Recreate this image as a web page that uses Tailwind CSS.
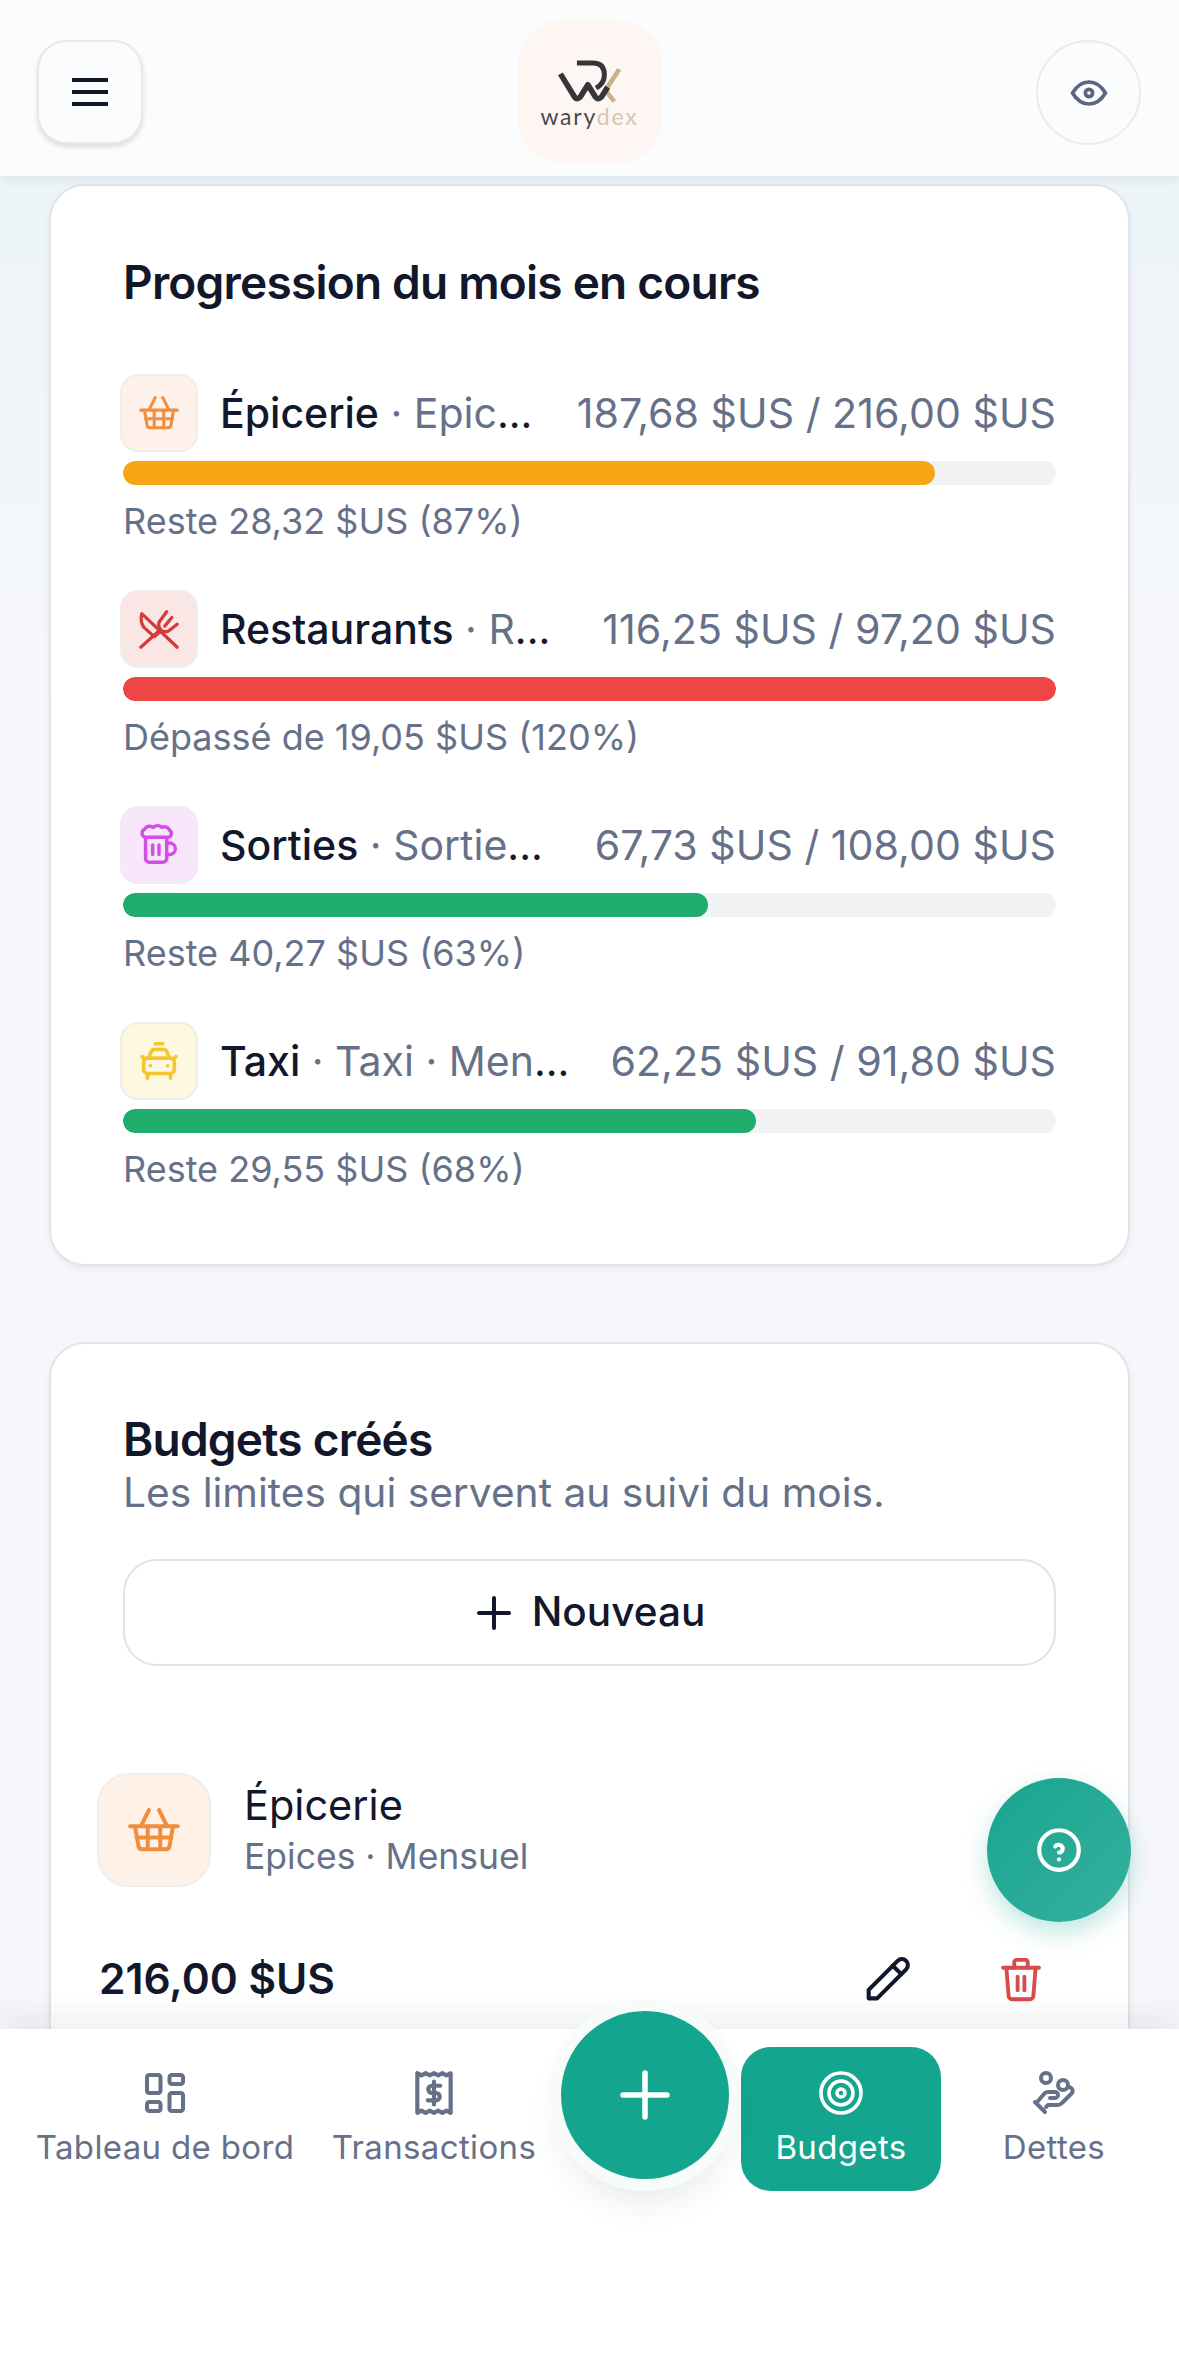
<!DOCTYPE html>
<html lang="fr">
<head>
<meta charset="utf-8">
<script src="https://cdn.jsdelivr.net/npm/@tailwindcss/browser@4"></script>
</head>
<body class="m-0">
<div class="relative w-[1179px] h-[2379px] overflow-hidden bg-[#f6f7fb] font-['Inter',sans-serif] text-[#12172b]">
  <div class="absolute inset-x-0 top-0 h-[700px] bg-gradient-to-b from-[#e9f3f7] to-[#f6f7fb]"></div>

  <!-- Header -->
  <header class="absolute z-20 inset-x-0 top-0 h-[176px] bg-[#fbfcfd] shadow-[0_4px_10px_rgba(30,40,60,0.07)] flex items-start justify-between pl-[37px] pr-[38px]">
    <button class="mt-[40px] w-[106px] h-[104px] rounded-[30px] bg-[#fbfcfd] border-2 border-[#e6e8ec] shadow-[0_3px_5px_rgba(30,40,60,0.14)] flex items-center justify-center">
      <svg width="36" height="28" viewBox="0 0 36 28" fill="none" stroke="#12172b" stroke-width="4"><path d="M0 2h36M0 14h36M0 26h36"/></svg>
    </button>
    <div class="mt-[20px] w-[144px] h-[143px] rounded-[44px] bg-[#fdf6f2] flex flex-col items-center pt-[40px]">
      <svg width="67" height="43" viewBox="200 180 200 130" fill="none">
        <path d="M390 208 L348 272 L375 305" stroke="#c9b28a" stroke-width="14"/>
        <path d="M212 222 L255 292 Q262 302 272 292 L295 255 L318 292 Q326 302 336 292 L355 262" stroke="#35363a" stroke-width="17" stroke-linejoin="round"/>
        <path d="M262 189 H310 Q345 189 345 225 Q345 250 320 265" stroke="#35363a" stroke-width="15"/>
      </svg>
      <div class="text-[23px] leading-[22px] tracking-[1.8px] mt-[2px] text-[#4a4a4c] font-['Lato',sans-serif]">wary<span class="text-[#d4c8ae]">dex</span></div>
    </div>
    <button class="mt-[40px] w-[105px] h-[105px] rounded-full bg-[#fbfcfd] border-2 border-[#e9ebef] flex items-center justify-center">
      <svg width="44" height="44" viewBox="0 0 24 24" fill="none" stroke="#5b6780" stroke-width="2" stroke-linecap="round" stroke-linejoin="round"><path d="M10 12a2 2 0 1 0 4 0a2 2 0 0 0 -4 0"/><path d="M21 12c-2.4 4 -5.4 6 -9 6c-3.6 0 -6.6 -2 -9 -6c2.4 -4 5.4 -6 9 -6c3.6 0 6.6 2 9 6"/></svg>
    </button>
  </header>

  <main class="relative px-[49px] pt-[184px] flex flex-col gap-[76px]">
    <!-- Progress card -->
    <section class="h-[1082px] rounded-[36px] bg-white border-2 border-[#e2e4e9] shadow-[0_3px_6px_rgba(30,40,60,0.06)] pl-[72px] pr-[72px] pt-[68px]">
      <h2 class="text-[46px] leading-[56px] font-semibold tracking-[-0.78px] m-0">Progression du mois en cours</h2>
      <div class="mt-[64px] flex flex-col gap-[47px]">

        <div>
          <div class="flex items-center justify-between -ml-[3px]">
            <div class="flex items-center gap-[22px] min-w-0">
              <span class="w-[78px] h-[78px] shrink-0 rounded-[18px] bg-[#fdf1e9] border-2 border-[#eeeeec] flex items-center justify-center">
                <svg width="46" height="46" viewBox="0 0 24 24" fill="none" stroke="#f28d3c" stroke-width="1.6" stroke-linecap="round" stroke-linejoin="round"><path d="M7 10 L10 4M17 10 L14 4"/><path d="M2.500 10.500h19"/><path d="M4.500 11l1.300 7.500a1.500 1.500 0 0 0 1.500 1.200h9.400a1.500 1.500 0 0 0 1.500 -1.200L19.500 11"/><path d="M9.500 11v8.500M14.500 11v8.500M5 15h14"/></svg>
              </span>
              <span class="text-[41px] leading-[50px] whitespace-nowrap font-medium">Épicerie<span class="font-normal text-[#667189]"> · Epic<span class="text-[#12172b]">...</span></span></span>
            </div>
            <span class="text-[41.2px] leading-[50px] text-[#667189] whitespace-nowrap">187,68 $US / 216,00 $US</span>
          </div>
          <div class="mt-[9px] h-[24px] rounded-full bg-[#f0f2f4] overflow-hidden"><div class="h-full rounded-full bg-[#f8a515] w-[87%]"></div></div>
          <p class="m-0 mt-[14px] text-[36px] leading-[44px] text-[#667189]">Reste 28,32 $US (87%)</p>
        </div>

        <div>
          <div class="flex items-center justify-between -ml-[3px]">
            <div class="flex items-center gap-[22px] min-w-0">
              <span class="w-[78px] h-[78px] shrink-0 rounded-[18px] bg-[#f9e6e5] border-2 border-[#eeeeec] flex items-center justify-center">
                <svg width="46" height="46" viewBox="0 0 24 24" fill="none" stroke="#d63a3a" stroke-width="1.7" stroke-linecap="round" stroke-linejoin="round"><path d="M2.500 21.500 L12.500 12.500"/><path d="M16 3 L12 8.500 Q11.500 11 13 12.500 Q14.500 14 17 13 L21.500 9.500"/><path d="M18.700 6 L15 10.500"/><path d="M21.500 21.500 L3 4 Q2 8 4 11 L9.500 16 L12.500 13.500"/></svg>
              </span>
              <span class="text-[41px] leading-[50px] whitespace-nowrap font-medium">Restaurants<span class="font-normal text-[#667189]"> · R<span class="text-[#12172b]">...</span></span></span>
            </div>
            <span class="text-[41.2px] leading-[50px] text-[#667189] whitespace-nowrap">116,25 $US / 97,20 $US</span>
          </div>
          <div class="mt-[9px] h-[24px] rounded-full bg-[#f0f2f4] overflow-hidden"><div class="h-full rounded-full bg-[#ee4545] w-full"></div></div>
          <p class="m-0 mt-[14px] text-[36px] leading-[44px] text-[#667189]">Dépassé de 19,05 $US (120%)</p>
        </div>

        <div>
          <div class="flex items-center justify-between -ml-[3px]">
            <div class="flex items-center gap-[22px] min-w-0">
              <span class="w-[78px] h-[78px] shrink-0 rounded-[18px] bg-[#f8e7fb] border-2 border-[#efecf1] flex items-center justify-center">
                <svg width="46" height="46" viewBox="0 0 24 24" fill="none" stroke="#d24fe6" stroke-width="1.8" stroke-linecap="round" stroke-linejoin="round"><path d="M5 8.500v10.500a2 2 0 0 0 2 2h7a2 2 0 0 0 2 -2v-10.500"/><path d="M5 8a2.200 2.200 0 0 1 -.5 -4.200a3 3 0 0 1 4.500 -1a3.500 3.500 0 0 1 4.500 0a3 3 0 0 1 4 1.500a2 2 0 0 1 -1 3.700h-11.500z"/><path d="M16 11h1.500a3 3 0 0 1 0 6h-1.500"/><path d="M8.700 12v5M12 12v5"/></svg>
              </span>
              <span class="text-[41px] leading-[50px] whitespace-nowrap font-medium">Sorties<span class="font-normal text-[#667189]"> · Sortie<span class="text-[#12172b]">...</span></span></span>
            </div>
            <span class="text-[41.2px] leading-[50px] text-[#667189] whitespace-nowrap">67,73 $US / 108,00 $US</span>
          </div>
          <div class="mt-[9px] h-[24px] rounded-full bg-[#f0f2f4] overflow-hidden"><div class="h-full rounded-full bg-[#20ac6c] w-[62.7%]"></div></div>
          <p class="m-0 mt-[14px] text-[36px] leading-[44px] text-[#667189]">Reste 40,27 $US (63%)</p>
        </div>

        <div>
          <div class="flex items-center justify-between -ml-[3px]">
            <div class="flex items-center gap-[22px] min-w-0">
              <span class="w-[78px] h-[78px] shrink-0 rounded-[18px] bg-[#fef8e0] border-2 border-[#eeeeea] flex items-center justify-center">
                <svg width="46" height="46" viewBox="0 0 24 24" fill="none" stroke="#f6c631" stroke-width="1.9" stroke-linecap="round" stroke-linejoin="round"><path d="M10 3h4"/><path d="M6.500 10.500 L8 7a1.500 1.500 0 0 1 1.400 -1h5.200a1.500 1.500 0 0 1 1.400 1L17.500 10.500"/><rect x="4" y="10.500" width="16" height="8" rx="2"/><path d="M6 18.500v2.500M18 18.500v2.500M4 10.500l-.8 -.8M20 10.500l.8 -.8"/><path d="M7.500 14.500h.01M16.500 14.500h.01"/></svg>
              </span>
              <span class="text-[41px] leading-[50px] whitespace-nowrap font-medium">Taxi<span class="font-normal text-[#667189]"> · Taxi · Men<span class="text-[#12172b]">...</span></span></span>
            </div>
            <span class="text-[41.2px] leading-[50px] text-[#667189] whitespace-nowrap">62,25 $US / 91,80 $US</span>
          </div>
          <div class="mt-[9px] h-[24px] rounded-full bg-[#f0f2f4] overflow-hidden"><div class="h-full rounded-full bg-[#20ac6c] w-[67.8%]"></div></div>
          <p class="m-0 mt-[14px] text-[36px] leading-[44px] text-[#667189]">Reste 29,55 $US (68%)</p>
        </div>
      </div>
    </section>

    <!-- Budgets card -->
    <section class="h-[900px] rounded-[36px] bg-white border-2 border-[#e2e4e9] shadow-[0_3px_6px_rgba(30,40,60,0.06)]">
      <div class="px-[72px] pt-[68px]">
        <h2 class="text-[46px] leading-[54px] font-semibold tracking-[-0.78px] m-0">Budgets créés</h2>
        <p class="m-0 text-[40.700px] leading-[54px] text-[#667189]">Les limites qui servent au suivi du mois.</p>
        <button class="mt-[39px] w-full h-[107px] rounded-[34px] bg-white border-2 border-[#dfe2e7] flex items-center justify-center gap-[18px] text-[40.500px] font-medium">
          <svg width="40" height="40" viewBox="0 0 40 40" fill="none" stroke="#12172b" stroke-width="4" stroke-linecap="round"><path d="M20 5v30M5 20h30"/></svg>
          Nouveau
        </button>
      </div>
      <div class="pl-[46px] pr-[50px] mt-[107px] flex items-center gap-[33px]">
        <span class="w-[114px] h-[114px] rounded-[32px] bg-[#fef1e8] border-2 border-[#eeeeec] flex items-center justify-center">
          <svg width="60" height="60" viewBox="0 0 24 24" fill="none" stroke="#f28d3c" stroke-width="1.600" stroke-linecap="round" stroke-linejoin="round"><path d="M7 10 L10 4M17 10 L14 4"/><path d="M2.500 10.500h19"/><path d="M4.500 11l1.300 7.500a1.500 1.500 0 0 0 1.500 1.200h9.400a1.500 1.500 0 0 0 1.500 -1.200L19.500 11"/><path d="M9.500 11v8.500M14.500 11v8.500M5 15h14"/></svg>
        </span>
        <div>
          <div class="text-[41.500px] leading-[54px]">Épicerie</div>
          <div class="text-[35.500px] leading-[50px] text-[#667189]">Epices · Mensuel</div>
        </div>
      </div>
      <div class="pl-[48px] pr-[80px] mt-[63px] flex items-center justify-between">
        <span class="text-[42.500px] leading-[50px] font-semibold">216,00 $US</span>
        <div class="flex items-center gap-[77px]">
          <svg width="58" height="58" viewBox="0 0 24 24" fill="none" stroke="#12172b" stroke-width="1.700" stroke-linecap="round" stroke-linejoin="round"><path d="M4 20h3.500L19.500 8a2.400 2.400 0 0 0 -3.500 -3.500L4 16.500V20"/><path d="M14 6.500l3.500 3.500"/></svg>
          <svg width="54" height="54" viewBox="0 0 24 24" fill="none" stroke="#d94a4a" stroke-width="1.700" stroke-linecap="round" stroke-linejoin="round"><path d="M4 7h16"/><path d="M5.500 7l1 12.500a1.500 1.500 0 0 0 1.500 1.500h8a1.500 1.500 0 0 0 1.500 -1.500l1 -12.500"/><path d="M9 7V4.500a1 1 0 0 1 1 -1h4a1 1 0 0 1 1 1V7"/><path d="M10.500 11v6M13.500 11v6"/></svg>
        </div>
      </div>
    </section>
  </main>

  <!-- Help FAB -->
  <button class="absolute z-10 left-[987px] top-[1778px] w-[144px] h-[144px] rounded-full bg-gradient-to-br from-[#17a58f] to-[#33b09f] shadow-[0_10px_24px_rgba(20,165,145,0.28)] flex items-center justify-center">
    <svg width="50" height="50" viewBox="0 0 24 24" fill="none" stroke="#fff" stroke-width="2" stroke-linecap="round" stroke-linejoin="round"><circle cx="12" cy="12" r="9.500"/><path d="M12 16.500v.01"/><path d="M12 13.200a1.800 1.800 0 0 0 .8 -3.400a2 2 0 0 0 -2.600 .5"/></svg>
  </button>

  <!-- Bottom nav -->
  <nav class="absolute z-20 inset-x-0 bottom-0 top-[2029px] bg-white shadow-[0_-14px_28px_rgba(30,40,60,0.07)] pl-[30px] pt-[18px] flex items-start text-[#667189] text-[33px] leading-[44px] font-normal tracking-[0.35px]">
    <a class="w-[270px] h-[144px] flex flex-col items-center pt-[22px] gap-[8px]">
      <svg class="-my-[3px]" width="54" height="54" viewBox="0 0 24 24" fill="none" stroke="#667189" stroke-width="1.800" stroke-linecap="round" stroke-linejoin="round"><path d="M5 4h4a1 1 0 0 1 1 1v6a1 1 0 0 1 -1 1h-4a1 1 0 0 1 -1 -1v-6a1 1 0 0 1 1 -1"/><path d="M5 16h4a1 1 0 0 1 1 1v2a1 1 0 0 1 -1 1h-4a1 1 0 0 1 -1 -1v-2a1 1 0 0 1 1 -1"/><path d="M15 12h4a1 1 0 0 1 1 1v6a1 1 0 0 1 -1 1h-4a1 1 0 0 1 -1 -1v-6a1 1 0 0 1 1 -1"/><path d="M15 4h4a1 1 0 0 1 1 1v2a1 1 0 0 1 -1 1h-4a1 1 0 0 1 -1 -1v-2a1 1 0 0 1 1 -1"/></svg>
      <span class="whitespace-nowrap">Tableau de bord</span>
    </a>
    <a class="w-[268px] h-[144px] flex flex-col items-center pt-[22px] gap-[8px]">
      <svg class="-my-[1px]" width="50" height="50" viewBox="0 0 24 24" fill="none" stroke="#667189" stroke-width="2" stroke-linecap="round" stroke-linejoin="round"><path d="M4 2.500v19l2 -1l2 1l2 -1l2 1l2 -1l2 1l2 -1l2 1v-19l-2 1l-2 -1l-2 1l-2 -1l-2 1l-2 -1l-2 1z"/><path d="M15 8.500h-4a1.700 1.700 0 0 0 0 3.500h2a1.700 1.700 0 0 1 0 3.500h-4"/><path d="M12 6.500v11"/></svg>
      <span class="whitespace-nowrap">Transactions</span>
    </a>
    <div class="w-[173px]"></div>
    <a class="w-[200px] h-[144px] rounded-[30px] bg-[#14a58f] text-white flex flex-col items-center pt-[22px] gap-[8px]">
      <svg width="48" height="48" viewBox="0 0 24 24" fill="none" stroke="#fff" stroke-width="1.800"><circle cx="12" cy="12" r="10"/><circle cx="12" cy="12" r="6"/><circle cx="12" cy="12" r="2"/></svg>
      <span>Budgets</span>
    </a>
    <a class="w-[226px] h-[144px] flex flex-col items-center pt-[22px] gap-[8px]">
      <svg width="48" height="48" viewBox="0 0 24 24" fill="none" stroke="#667189" stroke-width="2" stroke-linecap="round" stroke-linejoin="round"><circle cx="8" cy="4.500" r="2.500"/><circle cx="16.500" cy="8" r="2.500"/><path d="M2.500 16.500l5 5"/><path d="M4 16l3 -3.500a2.500 2.500 0 0 1 2 -1h3.500a1.500 1.500 0 0 1 0 3h-2.500"/><path d="M8 19l1 -1h4.500a3 3 0 0 0 2.500 -1l5 -5a2 2 0 0 0 -2 -3"/></svg>
      <span>Dettes</span>
    </a>
  </nav>
  <button class="absolute z-30 left-[561px] top-[2011px] w-[168px] h-[168px] rounded-full bg-[#14a58f] shadow-[0_0_0_12px_#f7fbfa,0_22px_34px_rgba(30,40,60,0.1)] flex items-center justify-center">
    <svg width="50" height="50" viewBox="0 0 50 50" fill="none" stroke="#fff" stroke-width="5.500" stroke-linecap="round"><path d="M25 3v44M3 25h44"/></svg>
  </button>
</div>
</body>
</html>
